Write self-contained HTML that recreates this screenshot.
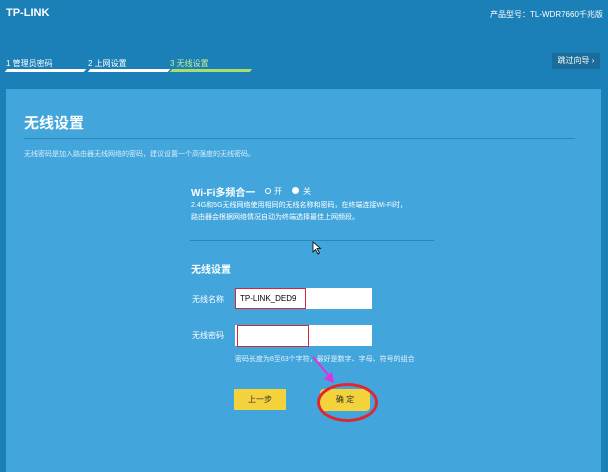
<!DOCTYPE html>
<html><head><meta charset="utf-8"><style>
body{margin:0;width:608px;height:472px;overflow:hidden;background:#1b80b7;font-family:"Liberation Sans","Noto Sans CJK SC",sans-serif;color:#fff;position:relative}
div,span{position:absolute}
.s{font-size:8px}
.bar{height:3px;top:69px;background:#fff;transform:skewX(-40deg)}
.in{background:#fff;height:21px}
</style></head><body>
<span style="left:6px;top:7px;font-weight:bold;font-size:11px">TP-LINK</span>
<span class="s" style="left:490px;top:9px">产品型号：TL-WDR7660千兆版</span>
<span class="s" style="left:6px;top:58px">1 管理员密码</span>
<span class="s" style="left:88px;top:58px">2 上网设置</span>
<span class="s" style="left:170px;top:58px;color:#c9f08f">3 无线设置</span>
<div class="bar" style="left:6px;width:79px"></div>
<div class="bar" style="left:89px;width:80px"></div>
<div class="bar" style="left:171px;width:80px;background:#a9dd6d"></div>
<div style="left:552px;top:53px;width:48px;height:16px;background:#1c6c99;font-size:8px;line-height:16px;text-align:center">跳过向导 ›</div>
<div style="left:6px;top:89px;width:595px;height:383px;background:#42a6dd"></div>
<span style="left:24px;top:112px;font-size:15px;font-weight:bold">无线设置</span>
<div style="left:24px;top:138px;width:551px;height:1px;background:#2a87bd"></div>
<span style="left:24px;top:149px;font-size:7px;color:#d8eefa">无线密码是加入路由器无线网络的密码，建议设置一个高强度的无线密码。</span>
<span style="left:191px;top:184px;font-size:10px;font-weight:bold">Wi-Fi多频合一</span>
<div style="left:265px;top:188px;width:4px;height:4px;border:1px solid #fff;border-radius:50%"></div>
<span style="left:274px;top:186px;font-size:8px">开</span>
<div style="left:292px;top:187px;width:7px;height:7px;background:#fff;border-radius:50%"></div>
<span style="left:303px;top:186px;font-size:8px">关</span>
<span style="left:191px;top:200px;font-size:7px;line-height:12px;width:250px">2.4G和5G无线网络使用相同的无线名称和密码，在终端连接Wi-Fi时，<br>路由器会根据网络情况自动为终端选择最佳上网频段。</span>
<div style="left:190px;top:240px;width:244px;height:1px;background:#2a87bd"></div>
<svg style="position:absolute;left:312px;top:241px" width="10" height="14"><path d="M1 1 L1 11 L3.5 8.5 L6 13 L7.5 12 L5 7.5 L8.5 7.5 Z" fill="#fff" stroke="#000" stroke-width="0.8"/></svg>
<span style="left:191px;top:261px;font-size:10px;font-weight:bold">无线设置</span>
<span style="left:192px;top:294px;font-size:8px">无线名称</span>
<div class="in" style="left:235px;top:288px;width:137px"></div>
<div style="left:235px;top:288px;width:69px;height:19px;border:1.5px solid #d0283a"></div>
<span style="left:240px;top:294px;font-size:8px;color:#000">TP-LINK_DED9</span>
<span style="left:192px;top:330px;font-size:8px">无线密码</span>
<div class="in" style="left:235px;top:325px;width:137px"></div>
<div style="left:237px;top:325px;width:70px;height:20px;border:1.5px solid #d0283a"></div>
<span style="left:235px;top:354px;font-size:7px;color:#e6f4fc">密码长度为8至63个字符，最好是数字、字母、符号的组合</span>
<svg style="position:absolute;left:310px;top:355px" width="30" height="32"><path d="M3 2 L20 22" stroke="#e030e0" stroke-width="2"/><path d="M14 24 L24 28 L22 17 Z" fill="#e030e0"/></svg>
<div style="left:234px;top:389px;width:52px;height:21px;background:#f4d23c;color:#333;font-size:8px;line-height:21px;text-align:center">上一步</div>
<div style="left:320px;top:389px;width:50px;height:22px;background:#f4d23c;color:#333;font-size:8px;line-height:22px;text-align:center;border-radius:4px">确 定</div>
<div style="left:317px;top:383px;width:55px;height:33px;border:3px solid #e0262f;border-radius:50%"></div>
</body></html>
